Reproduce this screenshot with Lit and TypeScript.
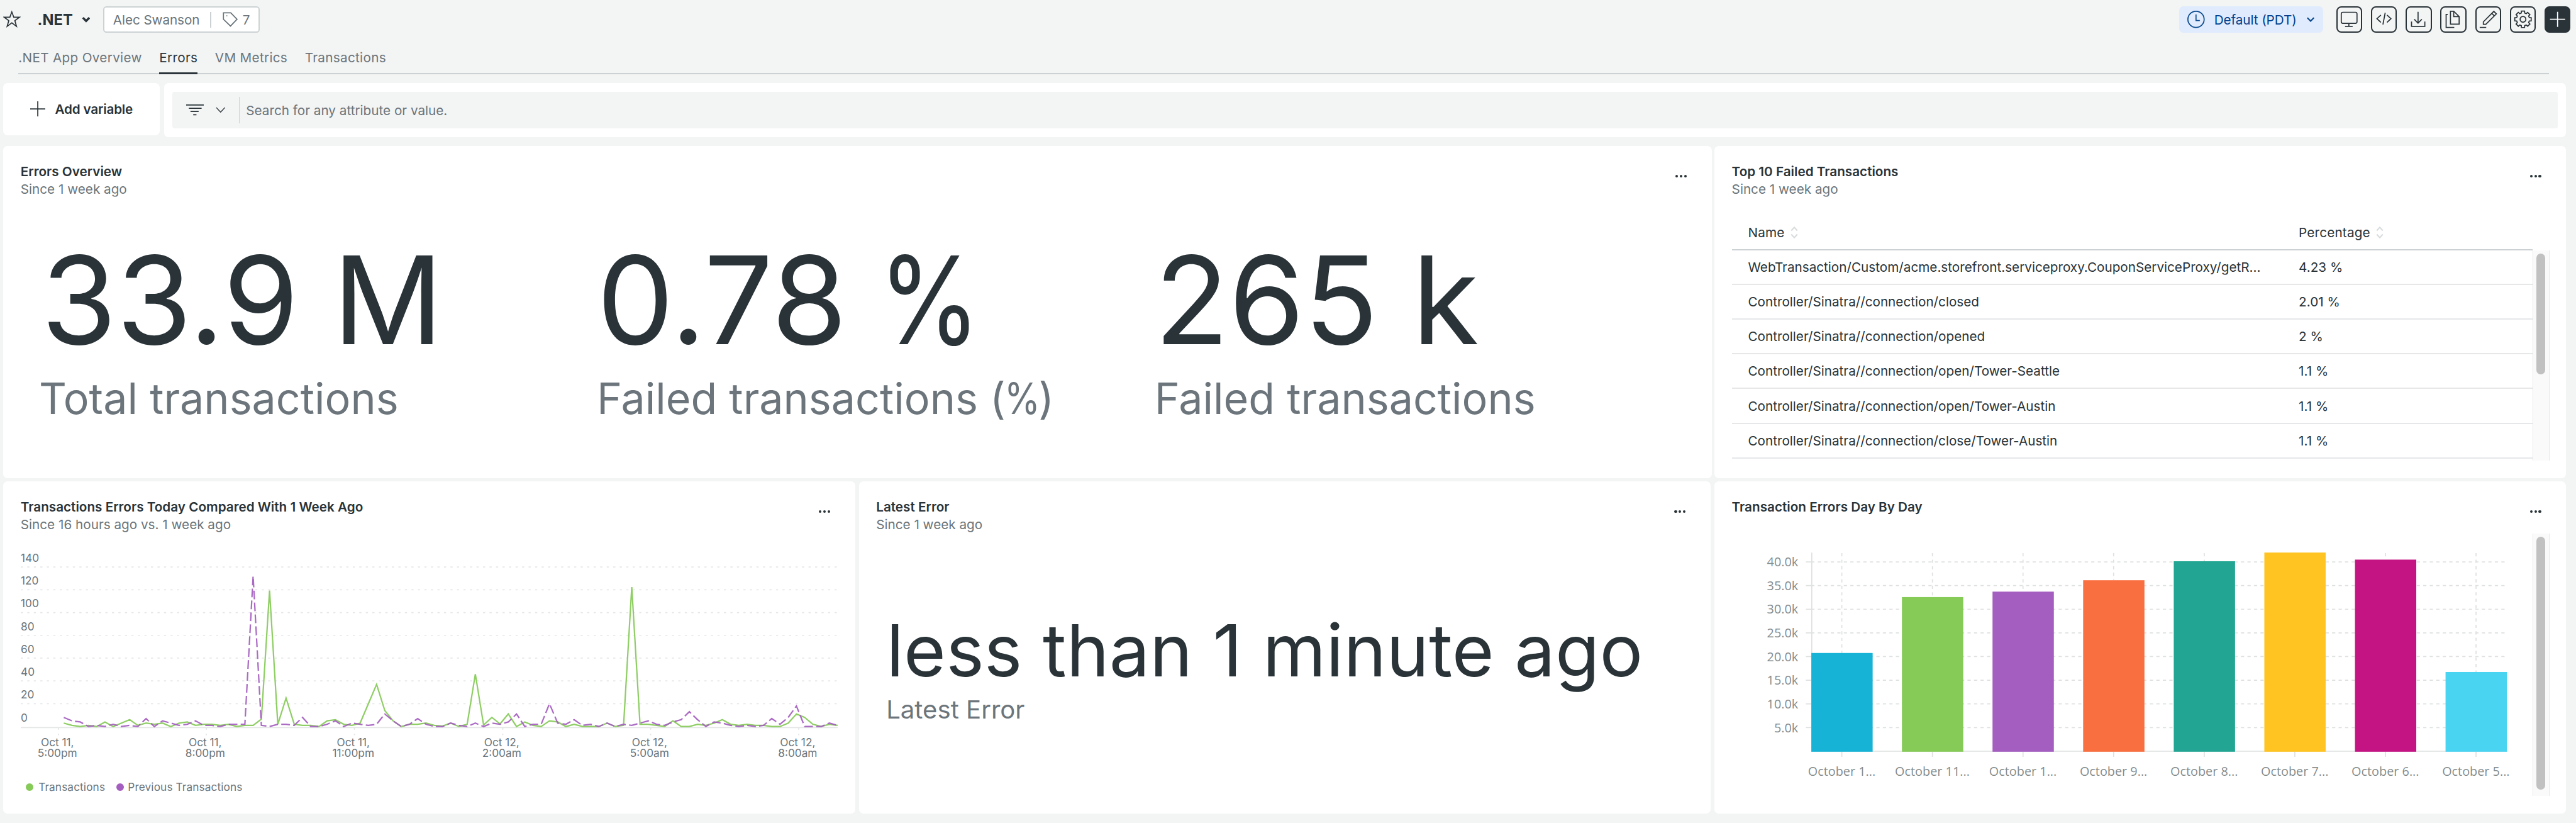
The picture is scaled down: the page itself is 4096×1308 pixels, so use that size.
import { LitElement, html, svg, css, unsafeCSS } from "lit";
import { customElement, property } from "lit/decorators.js";

// Design units to screen pixels.
const K = 4096 / 4748;
const px = (n: number) => `${(n * K).toFixed(3)}px`;
const u = (n: number) => unsafeCSS(px(n));

const INK = "#293338";
const MUTED = "#6b757b";

const TRANSACTIONS = [
  3, 1, 0, 1, 0, 4, 0, 3, 6, 1, 3, 2, 3, 0, 3, 4, 1, 2, 2, 1, 2, 0, 1, 1, 6.5, 119.3, 2, 25, 2, 1, 1, 0, 5, 6, 2, 1, 3,
  20, 37, 14, 5, 0, 2, 2, 3, 1, 0.4, 3, 0, 2, 46, 1.3, 8, 2.3, 11, 0, 4, 1, 0, 5, 4, 0, 2, 0, 0, 0, 3, 0, 1, 122.4, 2,
  2, 1, 0, 5, 0, 0, 2, 1, 3, 6, 2, 1, 2, 1, 1, 0, 0, 3, 11, 8, 2, 0, 2, 1,
];
const PREVIOUS = [
  8, 5, 4, 0, 1, 0, 2, 0, 1, 0, 7, 0, 5, 3, 1, 2, 5, 1, 1, 0, 2, 2, 2, 132, 1, 0, 2, 2, 1, 8, 0, 0, 2, 5, 0, 3, 2, 1, 2,
  11, 5, 0, 2, 7, 2, 0, 0, 3, 1, 0, 3, 0, 3, 2, 4, 11, 0, 2, 2, 20, 3, 2, 6, 1, 2, 0, 3, 0, 2, 1, 3, 5, 2, 1, 4, 6, 13,
  6, 0, 4, 3, 1, 0, 1, 0, 1, 7, 2, 8, 18, 0, 0, 0, 3, 1,
];
const TIMES: [number, string, string][] = [
  [105.5, "Oct 11,", "5:00pm"],
  [378, "Oct 11,", "8:00pm"],
  [651, "Oct 11,", "11:00pm"],
  [924.5, "Oct 12,", "2:00am"],
  [1197, "Oct 12,", "5:00am"],
  [1470, "Oct 12,", "8:00am"],
];
const DAYS: [string, number, string][] = [
  ["October 1…", 1203, "#16b3d6"],
  ["October 11…", 1100, "#86ca58"],
  ["October 1…", 1090, "#a45ebf"],
  ["October 9…", 1069, "#f96f3f"],
  ["October 8…", 1034, "#22a693"],
  ["October 7…", 1018, "#ffc422"],
  ["October 6…", 1031, "#c41484"],
  ["October 5…", 1238, "#49d4f1"],
];
const ROWS: [string, string][] = [
  ["WebTransaction/Custom/acme.storefront.serviceproxy.CouponServiceProxy/getR...", "4.23 %"],
  ["Controller/Sinatra//connection/closed", "2.01 %"],
  ["Controller/Sinatra//connection/opened", "2 %"],
  ["Controller/Sinatra//connection/open/Tower-Seattle", "1.1 %"],
  ["Controller/Sinatra//connection/open/Tower-Austin", "1.1 %"],
  ["Controller/Sinatra//connection/close/Tower-Austin", "1.1 %"],
];

const gearPath = () => {
  const pts: string[] = [];
  for (let i = 0; i < 8; i++) {
    const a = i * 45 - 90;
    for (const [d, r] of [[-15, 12], [-11, 15.4], [11, 15.4], [15, 12]]) {
      const t = ((a + d) * Math.PI) / 180;
      pts.push(`${(24 + r * Math.cos(t)).toFixed(2)} ${(24 + r * Math.sin(t)).toFixed(2)}`);
    }
  }
  return `M${pts.join("L")}Z`;
};

// Toolbar glyphs on a 48-unit square.
const GLYPHS: Record<string, string> = {
  monitor: "M12 11H35Q38 11 38 14V28.5Q38 31.5 35 31.5H12Q9 31.5 9 28.5V14Q9 11 12 11ZM23 31.5V37M16 37H30",
  code: "M18.3 16 11 22.8 18.3 29.6M26.2 12 22 33.6M29.5 16 36.8 22.8 29.5 29.6",
  download: "M23 10V31M16 24 23 31 30 24M11 28V37H35.5V28",
  copy: "M19 9V33H35V19L25 9ZM25 9V19H35M14 15H11V39H26",
  edit: "M14.7 33.3V28.7L34 9.3 38.7 14 19.3 33.3ZM30.3 13 35 17.7M8 39H20",
  gear: gearPath() + "M29.3 24A5.3 5.3 0 1 1 18.7 24A5.3 5.3 0 1 1 29.3 24Z",
  plus: "M10 24H38M24 10V38",
};

const icon = (w: number, h: number, d: string, cls = "", sw = 2) => svg`
  <svg class="icon ${cls}" viewBox="0 0 ${w} ${h}" width=${px(w)} height=${px(h)}>
    <path d=${d} fill="none" stroke="currentColor" stroke-width=${sw}></path>
  </svg>`;

@customElement("dash-card")
class DashCard extends LitElement {
  @property() heading = "";
  @property() sub = "";

  static styles = css`
    :host { display: flex; flex-direction: column; background: #fff; border-radius: ${u(8)}; overflow: hidden; }
    .head { display: flex; justify-content: space-between; box-sizing: border-box; height: ${u(95.5)}; padding: ${u(31.5)} ${u(46)} 0 ${u(32)}; }
    .title, .sub { font-size: ${u(24)}; line-height: ${u(32)}; white-space: nowrap; }
    .title { font-weight: 600; color: ${unsafeCSS(INK)}; }
    .sub { color: ${unsafeCSS(MUTED)}; }
    .more { display: flex; gap: ${u(3)}; padding-top: ${u(21.5)}; }
    .dot { width: ${u(5)}; height: ${u(5)}; border-radius: 50%; background: ${unsafeCSS(INK)}; }
  `;

  render() {
    return html`
      <div class="head">
        <div>
          <div class="title">${this.heading}</div>
          ${this.sub ? html`<div class="sub">${this.sub}</div>` : ""}
        </div>
        <div class="more"><i class="dot"></i><i class="dot"></i><i class="dot"></i></div>
      </div>
      <slot></slot>
    `;
  }
}

@customElement("line-chart")
class LineChart extends LitElement {
  static styles = css`
    :host { display: block; padding-left: ${u(32)}; }
    svg { display: block; }
    text { font: 400 20px Inter, sans-serif; fill: ${unsafeCSS(MUTED)}; }
    .legend { display: flex; align-items: center; height: ${u(60)}; padding-left: ${u(10)}; font-size: ${u(20)}; letter-spacing: ${u(0.12)}; color: ${unsafeCSS(MUTED)}; }
    .key { width: ${u(14)}; height: ${u(14)}; border-radius: 50%; margin-right: ${u(9)}; }
    .green { background: #86ca58; }
    .purple { background: #a45ebf; margin-left: ${u(20.5)}; margin-right: ${u(7.5)}; }
  `;

  private points(values: number[]) {
    return values.map((v, i) => `${(117.3 + i * 15.173).toFixed(1)},${(1338 - v * 2.1).toFixed(1)}`).join(" ");
  }

  render() {
    return html`
      <svg viewBox="38 982.5 1510 437.5" width=${px(1510)} height=${px(437.5)}>
        ${[140, 120, 100, 80, 60, 40, 20, 0].map((v, i) => svg`
          <text x="38" y=${1034.2 + i * 42.1}>${v}</text>
          ${v ? svg`<line x1="38" x2="1542" y1=${1044 + i * 42} y2=${1044 + i * 42} stroke="#e6e7e8" stroke-width="2" stroke-dasharray="4 8"></line>` : ""}`)}
        <line x1="38" x2="1544" y1="1340" y2="1340" stroke="#e3e5e6" stroke-width="2"></line>
        ${TIMES.map(([x, day, time]) => svg`
          <path d="M${x + 2} 1340V1344M${x + 2} 1351V1354" stroke="#e3e5e6" stroke-width="2"></path>
          <text x=${x} y="1374" text-anchor="middle">${day}</text>
          <text x=${x} y="1394" text-anchor="middle">${time}</text>`)}
        <polyline points=${this.points(TRANSACTIONS)} fill="none" stroke="#86ca58" stroke-opacity="0.92" stroke-width="2.6"></polyline>
        <polyline points=${this.points(PREVIOUS)} fill="none" stroke="#a45ebf" stroke-opacity="0.92" stroke-width="2.6" stroke-dasharray="16 6"></polyline>
      </svg>
      <div class="legend">
        <i class="key green"></i><span>Transactions</span>
        <i class="key purple"></i><span>Previous Transactions</span>
      </div>
    `;
  }
}

@customElement("bar-chart")
class BarChart extends LitElement {
  static styles = css`
    :host { display: block; }
    svg { display: block; }
    text { font: 400 23px "Open Sans", "Noto Sans", sans-serif; fill: #868d8d; }
    .grid { stroke: #dfe1e1; stroke-width: 2; }
    .dash { stroke-dasharray: 6 6; }
  `;

  render() {
    return html`
      <svg viewBox="3192 983 1476 484" width=${px(1476)} height=${px(484)}>
        ${[40, 35, 30, 25, 20, 15, 10, 5].map((v) => {
          const y = 1384 - v * 8.72;
          return svg`
            <text x="3314" y=${y + 8.4} text-anchor="end">${v}.0k</text>
            <line class="grid" x1="3328" x2="3339" y1=${y} y2=${y}></line>
            <line class="grid dash" x1="3338" x2="4616" y1=${y} y2=${y}></line>`;
        })}
        <path class="grid" d="M3339 1018V1384H4620" fill="none"></path>
        ${DAYS.map(([label, top, color], i) => {
          const x = 3338.2 + i * 167;
          return svg`
            <line class="grid dash" x1=${x + 56.2} x2=${x + 56.2} y1="1019" y2=${top}></line>
            <line class="grid" x1=${x + 56.2} x2=${x + 56.2} y1="1384" y2="1394.5"></line>
            <rect x=${x} y=${top} width="113" height=${1385 - top} fill=${color}></rect>
            <text x=${x + 56} y="1429.3" text-anchor="middle">${label.replace("…", "...")}</text>`;
        })}
      </svg>
    `;
  }
}

@customElement("app-root")
class AppRoot extends LitElement {
  static styles = css`
    :host { display: block; width: 4096px; height: 1308px; overflow: hidden; background: #f3f4f4; font-family: Inter, sans-serif; font-size: ${u(24)}; color: ${unsafeCSS(INK)}; }
    .icon { display: block; flex: none; }
    .muted { color: ${unsafeCSS(MUTED)}; }

    .topbar { display: flex; align-items: center; height: ${u(72)}; padding: 0 ${u(10)} 0 ${u(6)}; white-space: nowrap; }
    .name { font-size: ${u(27.5)}; font-weight: 700; margin-left: ${u(31)}; }
    .name-caret { margin-left: ${u(16)}; }
    .owner { display: flex; align-items: center; box-sizing: border-box; width: ${u(288)}; height: ${u(48)}; margin-left: ${u(24.5)}; padding-left: ${u(15.5)}; border: 2px solid #ccd2d4; border-radius: ${u(6)}; background: #fff; color: ${unsafeCSS(MUTED)}; }
    .owner-name { letter-spacing: ${u(-0.1)}; }
    .owner-sep { width: 2px; height: ${u(29)}; margin: 0 ${u(21)} 0 ${u(19)}; background: #ccd2d4; }
    .owner-count { margin-left: ${u(9)}; }
    .spacer { flex: 1; }
    .zone { display: flex; align-items: center; box-sizing: border-box; width: ${u(265)}; height: ${u(48)}; padding-left: ${u(15)}; border-radius: ${u(8)}; background: #e0ebfd; color: #0b4a8e; }
    .zone-name { margin: 0 ${u(19)} 0 ${u(17)}; letter-spacing: ${u(-0.08)}; color: #003f8c; }
    .tools { display: flex; gap: ${u(16)}; margin-left: ${u(24)}; }
    .tool { display: flex; align-items: center; justify-content: center; box-sizing: border-box; width: ${u(48)}; height: ${u(48)}; border-radius: ${u(9)}; border: 2px solid ${unsafeCSS(INK)}; }
    .tool.solid { background: ${unsafeCSS(INK)}; color: #fff; }

    .tabs { display: flex; gap: ${u(32)}; box-sizing: border-box; width: ${u(4664)}; height: ${u(65)}; margin-left: ${u(34)}; border-bottom: 2px solid #ccd2d4; letter-spacing: ${u(0.36)}; }
    .tab { box-sizing: border-box; height: ${u(65)}; padding-top: ${u(18.5)}; line-height: ${u(32)}; color: ${unsafeCSS(MUTED)}; }
    .tab.on { color: ${unsafeCSS(INK)}; border-bottom: ${u(4)} solid ${unsafeCSS(INK)}; }

    .filters { display: flex; align-items: flex-start; gap: ${u(8)}; margin: ${u(16)} 0 0 ${u(6)}; }
    .add { display: flex; align-items: center; box-sizing: border-box; width: ${u(288)}; height: ${u(96)}; padding-left: ${u(50)}; border-radius: ${u(8)}; background: #fff; }
    .add-label { margin-left: ${u(17.5)}; font-weight: 600; letter-spacing: ${u(-0.22)}; }
    .search { box-sizing: border-box; width: ${u(4428)}; height: ${u(100)}; padding: ${u(16)}; border-radius: ${u(8)}; background: #fff; }
    .field { display: flex; align-items: center; height: ${u(68)}; padding-left: ${u(25)}; border-radius: ${u(4)}; background: #f3f4f4; }
    .field-sep { width: 1px; height: ${u(48)}; margin: 0 ${u(12.5)} 0 ${u(24)}; background: #ccd2d4; }
    .field-caret { margin-left: ${u(22)}; }

    .grid { display: grid; grid-template-columns: repeat(3, ${u(1570)}); grid-template-rows: repeat(2, ${u(612)}); column-gap: ${u(7)}; row-gap: ${u(6)}; margin: ${u(16)} 0 0 ${u(6)}; }
    .wide { grid-column: span 2; margin-right: ${u(-2)}; }

    .metrics { display: grid; grid-template-columns: repeat(3, ${u(1028)}); padding: ${u(88.5)} 0 0 ${u(66)}; white-space: nowrap; }
    .big { font-size: ${u(225)}; line-height: ${u(200)}; }
    .big.first { padding-left: ${u(4)}; letter-spacing: ${u(-0.3)}; }
    .big.last { letter-spacing: ${u(-0.5)}; }
    .label { margin-top: ${u(31)}; font-size: ${u(79)}; line-height: ${u(100)}; color: ${unsafeCSS(MUTED)}; }
    .pct { display: inline-block; transform: scaleX(0.85); transform-origin: left; margin: 0 -0.19em 0 -0.025em; }
    .latest { padding: ${u(147)} 0 0 ${u(50.5)}; white-space: nowrap; }
    .latest-value { font-size: ${u(133)}; line-height: ${u(140)}; letter-spacing: ${u(0.18)}; }
    .latest-label { margin-top: ${u(7.6)}; font-size: ${u(46.5)}; line-height: ${u(60)}; color: ${unsafeCSS(MUTED)}; }

    .table { margin: ${u(32.5)} 0 0 ${u(32)}; }
    .row { display: grid; grid-template-columns: ${u(1015)} 1fr; align-items: center; box-sizing: border-box; width: ${u(1476)}; height: ${u(64)}; padding-left: ${u(30)}; border-bottom: 2px solid #e5e7e8; white-space: nowrap; }
    .row.header { border-color: #ccd2d4; }
    .cell { display: flex; align-items: center; }
    .cell.wider { letter-spacing: ${u(0.2)}; }
    .sort { margin-left: ${u(11)}; color: #d8dbdc; }
    .body, .bars { display: flex; }
    .body { height: ${u(388)}; overflow: hidden; }
    .track { box-sizing: border-box; width: ${u(31)}; height: 100%; padding: ${u(6)} 0 0 ${u(6)}; border: 1px solid #e6e7e7; border-width: 0 1px; background: #fafafa; }
    .thumb { width: ${u(16)}; border-radius: ${u(8)}; background: #c1c1c1; }
    .thumb.short { height: ${u(223)}; }
    .thumb.long { height: ${u(466)}; }
    .bars { height: ${u(484)}; margin-left: ${u(32)}; }
  `;

  private sort() {
    return icon(14, 22, "M1.5 7.5 7 1.5 12.5 7.5M1.5 14.5 7 20.5 12.5 14.5", "sort", 2.4);
  }

  render() {
    return html`
      <header class="topbar">
        ${icon(32, 34, "M16 3.5 19.6 13.2H30L21.6 19.4 24.6 30 16 23.6 7.4 30 10.4 19.4 2 13.2H12.4Z")}
        <span class="name">.NET</span>
        ${icon(16, 12, "M2 2.5 8 8.5 14 2.5", "name-caret", 4)}
        <div class="owner">
          <span class="owner-name">Alec Swanson</span>
          <i class="owner-sep"></i>
          ${icon(28, 28, "M1.5 1.5H15L26.5 13.5 14.5 26 1.5 13.5ZM7 7.2H8.6")}
          <span class="owner-count">7</span>
        </div>
        <div class="spacer"></div>
        <div class="zone">
          ${icon(32, 32, "M31 16A15 15 0 1 1 1 16A15 15 0 1 1 31 16ZM16 7V18H23")}
          <span class="zone-name">Default (PDT)</span>
          ${icon(14, 9, "M1 1.5 7 7.5 13 1.5", "", 2.6)}
        </div>
        <div class="tools">
          ${["monitor", "code", "download", "copy", "edit", "gear"].map((g) => html`<div class="tool">${icon(48, 48, GLYPHS[g])}</div>`)}
          <div class="tool solid">${icon(48, 48, GLYPHS.plus)}</div>
        </div>
      </header>

      <nav class="tabs">
        <div class="tab">.NET App Overview</div>
        <div class="tab on">Errors</div>
        <div class="tab">VM Metrics</div>
        <div class="tab">Transactions</div>
      </nav>

      <section class="filters">
        <div class="add">
          ${icon(28, 28, "M0 14H28M14 0V28")}
          <span class="add-label">Add variable</span>
        </div>
        <div class="search">
          <div class="field">
            ${icon(33, 20, "M0 1H33M5 7H28.5M8 13H23M13 19H19")}
            ${icon(18, 11, "M1 1 9 9.5 17 1", "field-caret", 1.6)}
            <i class="field-sep"></i>
            <span class="muted">Search for any attribute or value.</span>
          </div>
        </div>
      </section>

      <main class="grid">
        <dash-card class="wide" heading="Errors Overview" sub="Since 1 week ago">
          <div class="metrics">
            <div><div class="big first">33.9 M</div><div class="label">Total transactions</div></div>
            <div><div class="big">0.78 <span class="pct">%</span></div><div class="label">Failed transactions (<span class="pct">%</span>)</div></div>
            <div><div class="big last">265 k</div><div class="label">Failed transactions</div></div>
          </div>
        </dash-card>

        <dash-card heading="Top 10 Failed Transactions" sub="Since 1 week ago">
          <div class="table">
            <div class="row header">
              <div class="cell wider">Name${this.sort()}</div>
              <div class="cell wider">Percentage${this.sort()}</div>
            </div>
            <div class="body">
              <div>
                ${ROWS.map(([name, pct]) => html`<div class="row"><div class="cell">${name}</div><div class="cell">${pct}</div></div>`)}
              </div>
              <div class="track"><div class="thumb short"></div></div>
            </div>
          </div>
        </dash-card>

        <dash-card heading="Transactions Errors Today Compared With 1 Week Ago" sub="Since 16 hours ago vs. 1 week ago">
          <line-chart></line-chart>
        </dash-card>

        <dash-card heading="Latest Error" sub="Since 1 week ago">
          <div class="latest">
            <div class="latest-value">less than 1 minute ago</div>
            <div class="latest-label">Latest Error</div>
          </div>
        </dash-card>

        <dash-card heading="Transaction Errors Day By Day">
          <div class="bars">
            <bar-chart></bar-chart>
            <div class="track"><div class="thumb long"></div></div>
          </div>
        </dash-card>
      </main>
    `;
  }
}
